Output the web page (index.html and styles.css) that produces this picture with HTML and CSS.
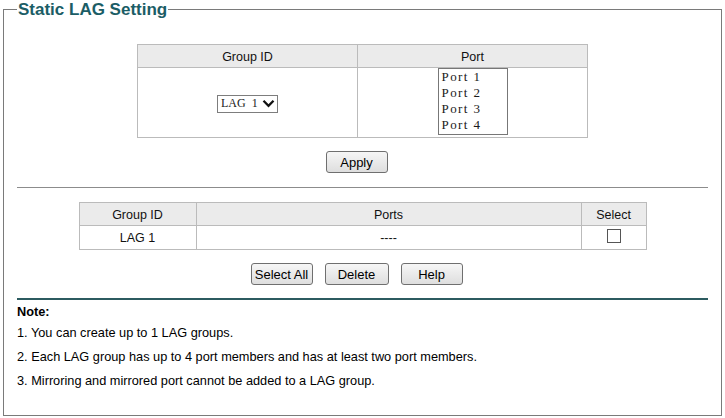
FILE: index.html
```html
<!DOCTYPE html>
<html>
<head>
<meta charset="utf-8">
<title>Static LAG Setting</title>
<link rel="stylesheet" href="styles.css">
</head>
<body>
<fieldset class="panel">
  <legend class="panel-title">Static LAG Setting</legend>

  <div class="cfg-table">
    <div class="cell head">Group ID</div>
    <div class="cell head last">Port</div>
    <div class="cell body center-v">
      <div class="dropdown">
        <span class="dd-text">LAG 1</span>
        <svg class="dd-arrow" width="13" height="9" viewBox="0 0 13 9"><path d="M1.5 1.8 L6.5 6.8 L11.5 1.8" fill="none" stroke="#111" stroke-width="2.3"/></svg>
      </div>
    </div>
    <div class="cell body last top-v">
      <div class="listbox">
        <div class="opt">Port 1</div>
        <div class="opt">Port 2</div>
        <div class="opt">Port 3</div>
        <div class="opt">Port 4</div>
      </div>
    </div>
  </div>

  <div class="btn-row">
    <span class="btn btn-apply">Apply</span>
  </div>

  <div class="rule"></div>

  <div class="list-table">
    <div class="cell head">Group ID</div>
    <div class="cell head">Ports</div>
    <div class="cell head last">Select</div>
    <div class="cell row">LAG 1</div>
    <div class="cell row">----</div>
    <div class="cell row last"><span class="checkbox"></span></div>
  </div>

  <div class="btn-row btn-row-multi">
    <span class="btn btn-selall">Select All</span>
    <span class="btn btn-delete">Delete</span>
    <span class="btn btn-help">Help</span>
  </div>

  <div class="rule-teal"></div>

  <div class="note">
    <div class="note-title">Note:</div>
    <div class="note-line">1. You can create up to 1 LAG groups.</div>
    <div class="note-line">2. Each LAG group has up to 4 port members and has at least two port members.</div>
    <div class="note-line">3. Mirroring and mirrored port cannot be added to a LAG group.</div>
  </div>
</fieldset>
</body>
</html>
```

FILE: styles.css
```css
html, body {
  margin: 0;
  padding: 0;
  background: #ffffff;
}

body {
  font-family: "Liberation Sans", Arial, sans-serif;
  font-size: 12.5px;
  color: #000;
}

.panel {
  margin: 0 3px;
  padding: 0 13px 22px 13px;
  border: 1px solid #7a7a7a;
  min-width: 0;
}

.panel-title {
  padding: 0 1px;
  margin-left: 0;
  font-size: 17px;
  line-height: 19px;
  font-weight: bold;
  color: #1b5d66;
}

/* top config table */
.cfg-table {
  display: grid;
  grid-template-columns: 220px 229px;
  width: max-content;
  margin: 25px auto 0;
  border: 1px solid #bbbbbb;
}

.cell {
  box-sizing: border-box;
  border-right: 1px solid #bbbbbb;
  border-bottom: 1px solid #bbbbbb;
  display: flex;
  justify-content: center;
  align-items: center;
  color: #111;
}

.cell.last {
  border-right: none;
}

.cell.head {
  height: 23px;
  background: #ebebeb;
  padding-top: 1px;
}

.cell.body {
  height: 69px;
  border-bottom: none;
}

.cell.top-v {
  align-items: flex-start;
}

.cell.center-v {
  padding-top: 2px;
}

.dropdown {
  box-sizing: border-box;
  width: 61px;
  height: 18px;
  border: 1px solid #7d7d7d;
  background: #fff;
  display: flex;
  align-items: center;
  padding-left: 3px;
  font-family: "Liberation Serif", "DejaVu Serif", serif;
  font-size: 12px;
  word-spacing: 3px;
  white-space: nowrap;
  color: #1a1a1a;
}

.dd-text {
  flex: 1;
  white-space: nowrap;
}

.dd-arrow {
  flex: none;
  margin-right: 2px;
}

.listbox {
  box-sizing: border-box;
  width: 70px;
  height: 67px;
  border: 1px solid #777777;
  padding: 0 0 0 3px;
  font-family: "Liberation Serif", "DejaVu Serif", serif;
  font-size: 13px;
  letter-spacing: 1.4px;
  white-space: nowrap;
  color: #1a1a1a;
}

.opt {
  height: 16px;
  line-height: 16px;
}

/* buttons */
.btn-row {
  display: flex;
  justify-content: center;
  padding-right: 12px;
  margin-top: 13px;
}

.btn-row-multi {
  gap: 12px;
}

.btn {
  box-sizing: border-box;
  height: 22px;
  border: 1px solid #6f6f6f;
  border-radius: 3px;
  background: linear-gradient(#f6f6f6, #dedede);
  display: flex;
  align-items: center;
  justify-content: center;
  font-size: 13px;
  color: #000;
}

.btn-apply { width: 62px; }
.btn-selall { width: 62px; }
.btn-delete { width: 64px; }
.btn-help { width: 62px; }

.rule {
  margin-top: 14px;
  height: 0;
  border-top: 1px solid #8c8c8c;
}

/* list table */
.list-table {
  display: grid;
  grid-template-columns: 117px 385px 64px;
  width: max-content;
  margin: 14px auto 0;
  border: 1px solid #bbbbbb;
}

.cell.row {
  height: 23px;
  border-bottom: none;
}

.checkbox {
  box-sizing: border-box;
  width: 14px;
  height: 14px;
  border: 1px solid #555;
  background: #fff;
  margin-bottom: 3px;
}

.rule-teal {
  margin-top: 13px;
  height: 2px;
  background: #2c5b60;
}

.note {
  margin-top: 5px;
  font-size: 12.75px;
}

.note-title {
  font-weight: bold;
  line-height: 14px;
  margin-bottom: 2px;
}

.note-line {
  line-height: 24px;
}
```
